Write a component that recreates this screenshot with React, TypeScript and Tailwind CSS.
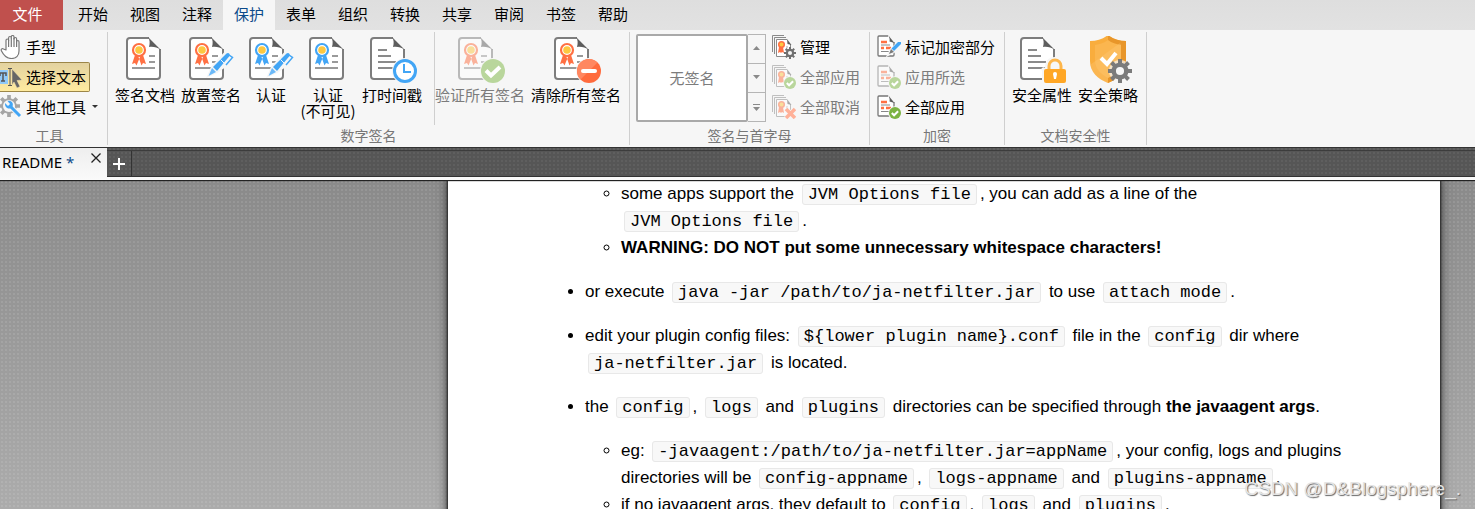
import React from "react";
import clsx from "clsx";

const tabs = ["开始", "视图", "注释", "保护", "表单", "组织", "转换", "共享", "审阅", "书签", "帮助"];

const galleryButtons = [
  { label: "上", d: "M0 4l3.500-4L7 4z" },
  { label: "下", d: "M0 0h7L3.500 4z" },
  { label: "更多", d: "M0 0h7v1H0zM0 3h7L3.500 7z" },
];

const ORANGE = "#ff7043";
const BLUE = "#42a5f5";

type SheetProps = { children?: React.ReactNode; faded?: boolean; text?: boolean; ribbon?: string };

// Page outline shared by all large ribbon icons
function Sheet({ children, faded, text, ribbon }: SheetProps) {
  return (
    <svg width="48" height="48" viewBox="0 0 48 48" fill="none">
      <g opacity={faded ? 0.5 : 1}>
        <path d="M24 2H5a3 3 0 0 0-3 3v35a3 3 0 0 0 3 3h27a3 3 0 0 0 3-3V13" fill="#fff" stroke="#7d7d7d" strokeWidth="2" />
        <path d="M23 1l1 1 12 12c-4-3-8-3.500-12-3 1-4 1-7-1-10z" fill="#5d5d5d" />
        {text ? (
          <path d="M9 14h9M9 20h13M9 26h18M9 32h18" stroke="#8a8a8a" strokeWidth="2" />
        ) : (
          <path d="M24 20h6M24 26h6M7 32h23" stroke="#9a9a9a" strokeWidth="2" />
        )}
        {ribbon && <Rosette color={ribbon} />}
      </g>
      {children}
    </svg>
  );
}

function Rosette({ color }: { color: string }) {
  return (
    <g>
      <path d="M10 19L7 28l3-1 1.500 2.500L15 21zM18 19l3 9-3-1-1.500 2.500L13.500 21z" fill={color} />
      <circle cx="14" cy="14" r="6" fill="#fff" stroke={color} strokeWidth="2.200" />
      <circle cx="14" cy="14" r="3.800" fill="#fdc840" />
    </g>
  );
}

function Pen() {
  return (
    <g>
      <path d="M21 39l3.500-8L37 17.500l6 1 1 4-7 7-8 6z" fill="#f6f6f6" stroke="#f6f6f6" strokeWidth="3" />
      <path d="M20.500 40l3.500-8 4 4z" fill="#6bb9f8" />
      <path d="M25 31L38.500 17.500c2-1.500 4 .5 3 2.500L29 35z" fill={BLUE} />
      <path d="M32.500 23.500l4 4" stroke="#f6f6f6" />
      <path d="M41 19l3.500 2.500L38 29" stroke={BLUE} strokeWidth="1.500" />
    </g>
  );
}

function Clock() {
  return (
    <g>
      <circle cx="36" cy="35" r="13" fill="#f6f6f6" />
      <circle cx="36" cy="35" r="10.500" fill="#fff" stroke={BLUE} strokeWidth="3" />
      <path d="M35 28v8h7" stroke={BLUE} strokeWidth="2" />
    </g>
  );
}

function Check() {
  return (
    <g>
      <circle cx="36" cy="35" r="13" fill="#f6f6f6" />
      <circle cx="36" cy="35" r="12" fill="#b9d69c" />
      <path d="M29 34.500l5 5L43 31" stroke="#fff" strokeWidth="4" />
    </g>
  );
}

function Minus() {
  return (
    <g>
      <circle cx="36" cy="35" r="13" fill="#f6f6f6" />
      <circle cx="36" cy="35" r="12" fill="#ff6b3d" />
      <path d="M27.500 43.500a12 12 0 0 1 17-17z" fill="#ff8760" />
      <path d="M30 35h12" stroke="#fff" strokeWidth="4" strokeLinecap="round" />
    </g>
  );
}

function Lock() {
  return (
    <g>
      <path d="M23 35a2 2 0 0 1 3-3c0-7 3-11 10-11s10 4 10 11c2 0 3 1 3 3v13H23z" fill="#f6f6f6" />
      <path d="M30 34v-4a6 6 0 0 1 12 0v4" stroke="#fdb64b" strokeWidth="3" />
      <rect x="25" y="33" width="22" height="14" rx="2" fill="#ffa726" />
      <path d="M34 38a2 2 0 1 1 4 0l-1 5h-2z" fill="#fff" />
    </g>
  );
}

function Gear({ cx, cy, r, color }: { cx: number; cy: number; r: number; color: string }) {
  return (
    <g transform={`translate(${cx} ${cy}) scale(${r / 12})`}>
      <circle r="8.500" fill="#f6f6f6" />
      {[0, 45, 90, 135].map((a) => (
        <path key={a} d="M-2-12h4v5h-4zM-2 12h4v-5h-4z" fill={color} transform={`rotate(${a})`} />
      ))}
      <circle r="6.300" stroke={color} strokeWidth="4.500" fill="none" />
    </g>
  );
}

function Shield() {
  return (
    <svg width="48" height="50" viewBox="0 1 48 50" fill="none">
      <path d="M20 0c5 4 11 6 18 6v20c0 11-8 18-18 22C10 44 2 37 2 26V6c7 0 13-2 18-6z" fill="#f9ad3d" />
      <path d="M20 0c5 4 11 6 18 6v20c0 11-8 18-18 22z" fill="#e8962a" />
      <path d="M20 5c4 3 8 4 13 5v15c0 9-6 14-13 18C13 39 7 34 7 25V10c5-1 9-2 13-5z" fill="#fbb64f" />
      <path d="M2 30L32 8l1 2v15c0 9-6 14-13 18v5C10 44 4 38 2 30z" fill="#ffcc80" opacity=".3" />
      <path d="M13 23l6 6 9-11" stroke="#fff" strokeWidth="4" />
      <circle cx="32" cy="36" r="11" fill="#f6f6f6" opacity=".7" />
      <Gear cx={32} cy={36} r={12} color="#7b7b7b" />
    </svg>
  );
}

function HandIcon() {
  return (
    <svg width="24" height="24" viewBox="0 0 24 24" fill="#fff" stroke="#777" strokeWidth="1.200" strokeLinejoin="round">
      <path d="M6 15V5.500c0-2 2.600-2 2.600 0V3c0-2 2.700-2 2.700 0V2c0-2 2.700-2 2.700 0v2c0-2 2.600-2 2.600 0v3c0-2 2.400-2 2.400 0v9c0 5-3 7.500-7.500 7.500S4 21 1.500 16c-1-2 .8-3 2-2z" />
      <path d="M8.600 5v7M11.300 3v9M14 3v9M16.600 6v6" fill="none" />
    </svg>
  );
}

function SelectIcon() {
  return (
    <svg width="24" height="24" viewBox="0 0 24 24" fill="none">
      <rect x="0" y="5" width="8" height="14" fill="#90caf9" />
      <path d="M0 8h6v3M3 8v8M1 16h4M0 8v3" stroke="#555" strokeWidth="1.500" />
      <path d="M8 3.500h4M8 20.500h4M10 3.500v17" stroke="#555" />
      <path d="M12 4l10 11-5 .5 3 6-3 1.500-3-6-2 3z" fill="#666" stroke="#f5e3b0" strokeWidth=".5" />
    </svg>
  );
}

function ToolsIcon() {
  return (
    <svg width="24" height="24" viewBox="0 0 24 24" fill="none">
      <Gear cx={9} cy={11} r={11} color="#a5a5a5" />
      <circle cx="9" cy="11" r="6" fill="#f6f6f6" />
      <path d="M10 11l10 10" stroke="#f6f6f6" strokeWidth="5" />
      <path d="M10 11l10 10" stroke={BLUE} strokeWidth="3" />
      <path d="M5 8l3 3 2-2-2.500-3C11 5 14 8 12.500 11.500 11 15 4.500 14 5 8z" fill={BLUE} />
    </svg>
  );
}

type Badge = "gear" | "check" | "cross" | "pen";

function SmallBadge({ kind, faded }: { kind: Badge; faded?: boolean }) {
  if (kind === "gear") return <Gear cx={18} cy={18} r={6} color="#707070" />;
  if (kind === "cross") {
    return (
      <g>
        <path d="M14 14l9 9M23 14l-9 9" stroke="#f6f6f6" strokeWidth="5" />
        <path d="M14 14l9 9M23 14l-9 9" stroke="#ffb199" strokeWidth="3.500" />
      </g>
    );
  }
  if (kind === "pen") {
    return (
      <g>
        <path d="M11 20l3-6 8-7 2 2-7 8z" fill="#f6f6f6" stroke="#f6f6f6" strokeWidth="2" />
        <path d="M12 19l2-5 3 3z" fill="#7a7a7a" />
        <path d="M14.500 13.500L21 7h3v2l-7 7z" fill={BLUE} />
      </g>
    );
  }
  return (
    <g>
      <circle cx="18" cy="18" r="6.800" fill="#f6f6f6" />
      <circle cx="18" cy="18" r="6" fill={faded ? "#b9d69c" : "#7cb342"} />
      <path d="M14.800 18l2.300 2.300 4-4" stroke="#fff" strokeWidth="2" />
    </g>
  );
}

function StackIcon({ kind, faded }: { kind: Badge; faded?: boolean }) {
  return (
    <svg width="24" height="24" viewBox="0 0 24 24" fill="none">
      <g opacity={faded ? 0.5 : 1}>
        <path d="M.5 17V.5H12M2.500 19V2.500H14" stroke="#8a8a8a" />
        <path d="M15 4.500H4.500v17h14V9" fill="#fff" stroke="#8a8a8a" />
        <path d="M15 4l4.500 6-4-1z" fill="#5d5d5d" />
        <path d="M7 12l-1 6 2-1 1 1 1-1 2 1-1-6z" fill={ORANGE} />
        <circle cx="9.500" cy="9.500" r="2.800" fill="#fdc840" stroke={ORANGE} strokeWidth="1.500" />
        <path d="M14 12h2M13 15h3" stroke="#aaa" />
      </g>
      <SmallBadge kind={kind} faded={faded} />
    </svg>
  );
}

function RedactIcon({ kind, faded }: { kind: Badge; faded?: boolean }) {
  return (
    <svg width="24" height="24" viewBox="0 0 24 24" fill="none">
      <g opacity={faded ? 0.5 : 1}>
        <path d="M11 1H2a1 1 0 0 0-1 1v18a1 1 0 0 0 1 1h14a1 1 0 0 0 1-1V7" fill="#fff" stroke="#777" strokeWidth="1.300" />
        <path d="M11 0l6.500 8-5-1.500c.5-2 0-4-1.500-6.500z" fill="#5d5d5d" />
        <path d="M4 7h6M4 13h3M9 13h5" stroke={ORANGE} strokeWidth="2.400" />
        <path d="M4 10h9M4 16.500h8" stroke="#888" />
      </g>
      <SmallBadge kind={kind} faded={faded} />
    </svg>
  );
}

type ButtonProps = { icon: React.ReactNode; label: string; faded?: boolean };

function RowButton({ icon, label, faded }: ButtonProps) {
  return (
    <button disabled={faded} className={clsx("flex h-[30px] items-center gap-1 text-left", faded && "text-[#7c7c7c]")}>
      {icon}
      {label}
    </button>
  );
}

function BigButton({ icon, label, faded, badge, width }: ButtonProps & { badge?: boolean; width: string }) {
  return (
    <button
      disabled={faded}
      className={clsx("flex flex-col items-center justify-start whitespace-pre-line leading-4", width, faded && "text-[#7c7c7c]")}
    >
      <span className={clsx("flex h-[55px] items-start pt-1", badge ? "pl-[2px]" : "pl-2")}>{icon}</span>
      {label}
    </button>
  );
}

function Group({ title, className, children }: { title: string; className?: string; children: React.ReactNode }) {
  return (
    <section className={clsx("flex flex-none flex-col border-r border-[#cfcfcf]", className)}>
      <div className="flex h-[93px]">{children}</div>
      <h2 className="text-center text-sm leading-5 text-[#777]">{title}</h2>
    </section>
  );
}

function Ribbon() {
  return (
    <div className="flex bg-[#f6f6f6] pb-[2px] pt-[2px]">
      <Group title="工具" className="w-[108px] pr-2">
        <div className="flex flex-col whitespace-nowrap">
          <button className="flex h-[30px] items-center gap-[2px]">
            <HandIcon />
            手型
          </button>
          <button className="flex h-[30px] w-[90px] items-center gap-[2px] rounded-r-xs border border-l-0 border-[#9c8648] bg-linear-to-b from-[#e3d2a0] to-[#ffeb9f]">
            <SelectIcon />
            选择文本
          </button>
          <button className="flex h-[30px] items-center gap-[2px]">
            <ToolsIcon />
            其他工具
            <svg width="6" height="4" viewBox="0 0 6 4" className="ml-1"><path d="M0 0h6L3 3z" fill="#333" /></svg>
          </button>
        </div>
      </Group>
      <Group title="数字签名" className="w-[522px]">
        <div className="flex pl-1">
          <BigButton width="w-[66px]" icon={<Sheet ribbon={ORANGE} />} label="签名文档" />
          <BigButton badge width="w-[66px]" icon={<Sheet ribbon={ORANGE}><Pen /></Sheet>} label="放置签名" />
          <BigButton badge width="w-[54px]" icon={<Sheet ribbon={BLUE}><Pen /></Sheet>} label="认证" />
          <BigButton width="w-[60px]" icon={<Sheet ribbon={BLUE} />} label={"认证\n(不可见)"} />
          <BigButton badge width="w-[68px]" icon={<Sheet text><Clock /></Sheet>} label="打时间戳" />
        </div>
        <div className="ml-2 flex border-l border-[#cfcfcf]">
          <BigButton badge width="w-[90px]" faded icon={<Sheet ribbon={ORANGE} faded><Check /></Sheet>} label="验证所有签名" />
          <BigButton badge width="w-[102px]" icon={<Sheet ribbon={ORANGE}><Minus /></Sheet>} label="清除所有签名" />
        </div>
      </Group>
      <Group title="签名与首字母" className="w-[240px]">
        <div className="ml-[6px] mt-[2px] flex h-[88px]">
          <div className="flex w-[112px] items-center justify-center rounded-xs border-2 border-[#a9a9a9] bg-white text-[#7c7c7c]">无签名</div>
          <div className="flex w-[18px] flex-col divide-y divide-[#b5b5b5] border border-l-0 border-[#b5b5b5]">
            {galleryButtons.map(({ label, d }) => (
              <button key={label} aria-label={label} className="flex flex-1 items-center justify-center">
                <svg width="7" height="7" viewBox="0 0 7 7"><path d={d} fill="#8a8a8a" /></svg>
              </button>
            ))}
          </div>
        </div>
        <div className="ml-[6px] flex flex-col">
          <RowButton icon={<StackIcon kind="gear" />} label="管理" />
          <RowButton faded icon={<StackIcon kind="check" faded />} label="全部应用" />
          <RowButton faded icon={<StackIcon kind="cross" faded />} label="全部取消" />
        </div>
      </Group>
      <Group title="加密" className="w-[135px]">
        <div className="flex flex-col pl-[7px]">
          <RowButton icon={<RedactIcon kind="pen" />} label="标记加密部分" />
          <RowButton faded icon={<RedactIcon kind="check" faded />} label="应用所选" />
          <RowButton icon={<RedactIcon kind="check" />} label="全部应用" />
        </div>
      </Group>
      <Group title="文档安全性" className="w-[142px]">
        <div className="flex pl-1">
          <BigButton badge width="w-[66px]" icon={<Sheet text><Lock /></Sheet>} label="安全属性" />
          <BigButton width="w-[66px]" icon={<Shield />} label="安全策略" />
        </div>
      </Group>
    </div>
  );
}

function Code({ children }: { children: React.ReactNode }) {
  return (
    <code className="mx-[3px] rounded-[3px] border border-[#e8e8e8] bg-[#f8f8f8] px-[5px] font-['Courier_New','Liberation_Mono',monospace] text-[17px] leading-[19px]">
      {children}
    </code>
  );
}

function Page() {
  return (
    <article className="min-w-0 flex-1 whitespace-nowrap bg-white pl-[137px] font-['Liberation_Sans',Arial,sans-serif] text-[17px] leading-[27px] shadow-[0_0_2px_1px_#222,0_0_10px_1px_#444]">
      <ul className="flex list-disc flex-col gap-[17px]">
        <li className="list-none">
          <ul className="list-[circle] pl-9">
            <li>
              some apps support the <Code>JVM Options file</Code>, you can add as a line of the
              <br />
              <Code>JVM Options file</Code>.
            </li>
            <li><b>WARNING: DO NOT put some unnecessary whitespace characters!</b></li>
          </ul>
        </li>
        <li>or execute <Code>java -jar /path/to/ja-netfilter.jar</Code> to use <Code>attach mode</Code>.</li>
        <li>
          edit your plugin config files: <Code>{"${lower plugin name}.conf"}</Code> file in the <Code>config</Code> dir where
          <br />
          <Code>ja-netfilter.jar</Code> is located.
        </li>
        <li>
          the <Code>config</Code>, <Code>logs</Code> and <Code>plugins</Code> directories can be specified through <b>the javaagent args</b>.
          <ul className="mt-[17px] list-[circle] pl-9">
            <li>
              eg: <Code>-javaagent:/path/to/ja-netfilter.jar=appName</Code>, your config, logs and plugins
              <br />
              directories will be <Code>config-appname</Code>, <Code>logs-appname</Code> and <Code>plugins-appname</Code>.
            </li>
            <li>
              if no javaagent args, they default to <Code>config</Code>, <Code>logs</Code> and <Code>plugins</Code>.
            </li>
          </ul>
        </li>
      </ul>
    </article>
  );
}

export default function App() {
  return (
    <div className="relative flex h-screen flex-col overflow-hidden font-['Noto_Sans_CJK_SC',sans-serif] text-[15px] text-black">
      <nav className="flex h-[30px] flex-none bg-linear-to-b from-[#dedede] to-[#e2e2e2]">
        <button className="mr-1 w-[63px] bg-[#c0504d] pb-[2px] pr-2 text-white">文件</button>
        {tabs.map((t) => (
          <button key={t} className={clsx("w-[52px] pb-[2px]", t === "保护" && "bg-[#f6f6f6] text-[#0b4a8a]")}>{t}</button>
        ))}
      </nav>
      <Ribbon />
      <div className="relative z-10 flex h-[33px] flex-none border-b-[3px] border-[#fafafa] bg-[#565656] bg-[radial-gradient(#5f5f5f_1px,transparent_1px)] bg-size-[4px_4px] shadow-[0_1px_1px_#222]">
        <div className="-mb-[3px] flex w-[107px] items-center justify-between border-t border-[#333] bg-linear-to-b from-[#eee] to-[#fafafa] pb-1 pl-[2px] pr-[6px] font-['Noto_Sans',sans-serif]">
          <span>README <span className="text-[#0b4a8a]">*</span></span>
          <button aria-label="关闭" className="-mt-2">
            <svg width="10" height="10" viewBox="0 0 10 10" stroke="#222" strokeWidth="1.300"><path d="M.5.5l9 9M9.500.5l-9 9" /></svg>
          </button>
        </div>
        <div className="flex flex-1 border-y border-[#333] pt-[2px]">
          <div className="flex flex-1 border-t border-[#3c3c3c]">
            <button aria-label="新建" className="flex w-[25px] items-center justify-center border-r border-[#333]">
              <svg width="12" height="12" viewBox="0 0 12 12" stroke="#fff" strokeWidth="2"><path d="M6 0v12M0 6h12" /></svg>
            </button>
          </div>
        </div>
      </div>
      <main className="min-h-0 flex-1 overflow-hidden bg-linear-to-b from-[#8a8a8a] to-[#acacac]">
        <div className="flex min-h-full bg-[radial-gradient(#ffffff18_1px,transparent_1px)] bg-size-[4px_4px] pl-[448px] pr-[35px]">
          <Page />
        </div>
      </main>
      <p className="absolute bottom-2 right-[14px] font-['Liberation_Sans',sans-serif] text-[19px] leading-6 text-[#e4e4e4] [text-shadow:1px_1px_1px_#666]">CSDN @D&Blogsphere_.</p>
    </div>
  );
}
